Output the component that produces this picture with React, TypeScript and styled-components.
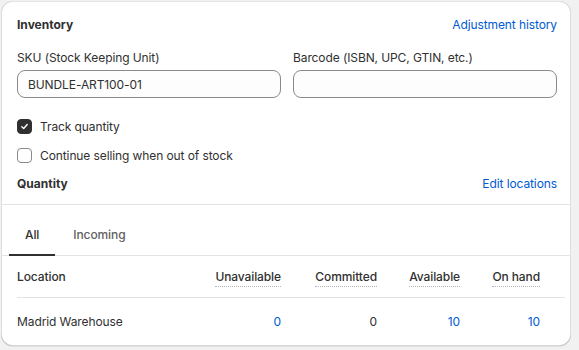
import React from "react";
import styled, { createGlobalStyle } from "styled-components";

const Global = createGlobalStyle`
  html, body { margin: 0; padding: 0; background: #f1f1f1; }
  body {
    font-family: Inter, "Noto Sans", "Liberation Sans", sans-serif;
    font-size: 12px;
    letter-spacing: -0.1px;
    color: #303030;
    -webkit-font-smoothing: antialiased;
  }
  * { box-sizing: border-box; }
`;

const Page = styled.div`
  padding: 1px 8px 4px 1px;
`;

const Card = styled.section`
  width: 570px;
  background: #ffffff;
  border-radius: 12px;
  overflow: hidden;
  box-shadow: 0 1px 0 0 rgba(26, 26, 26, 0.07),
    inset 0 1px 0 0 rgba(204, 204, 204, 0.5),
    inset 0 -1px 0 0 rgba(0, 0, 0, 0.17),
    inset -1px 0 0 0 rgba(0, 0, 0, 0.13),
    inset 1px 0 0 0 rgba(0, 0, 0, 0.13);
`;

const Top = styled.div`
  padding: 14px 14px 10px 16px;
  display: flex;
  flex-direction: column;
`;

const HeadRow = styled.div<{ $mt?: number }>`
  display: flex;
  justify-content: space-between;
  align-items: center;
  height: 20px;
  line-height: 20px;
  margin-top: ${(p) => p.$mt ?? 0}px;
`;

const Heading = styled.h2`
  margin: 0;
  font-size: 12px;
  font-weight: 650;
  letter-spacing: 0;
  color: #303030;
`;

const Link = styled.a`
  color: #005bd3;
  font-weight: 400;
  text-decoration: none;
  cursor: pointer;
`;

const Fields = styled.div`
  display: grid;
  grid-template-columns: 1fr 1fr;
  gap: 12px;
  margin-top: 13px;
`;

const Field = styled.label`
  display: flex;
  flex-direction: column;
`;

const FieldLabel = styled.span`
  line-height: 20px;
  color: #303030;
  font-weight: 400;
`;

const Input = styled.input`
  margin-top: 2px;
  height: 28px;
  border: 1px solid #8a8a8a;
  border-radius: 8px;
  background: #fdfdfd;
  padding: 0 10px;
  font-family: inherit;
  font-size: 12px;
  letter-spacing: -0.1px;
  color: #303030;
  outline: none;
`;

const Checks = styled.div`
  margin-top: 14px;
  display: flex;
  flex-direction: column;
`;

const CheckRow = styled.label`
  display: flex;
  align-items: center;
  gap: 8px;
  height: 29px;
  line-height: 20px;
  font-weight: 400;
`;

const Box = styled.span<{ $checked?: boolean }>`
  width: 15px;
  height: 15px;
  border-radius: 4px;
  display: inline-flex;
  align-items: center;
  justify-content: center;
  background: ${(p) => (p.$checked ? "#303030" : "#ffffff")};
  border: 1px solid ${(p) => (p.$checked ? "#303030" : "#8a8a8a")};
`;

const Divider = styled.div`
  border-top: 1px solid #e3e3e3;
`;

const Tabs = styled.div`
  display: flex;
  gap: 2px;
  padding: 7px 8px 0;
  border-bottom: 1px solid #e3e3e3;
`;

const Tab = styled.button<{ $active?: boolean }>`
  height: 44px;
  margin-bottom: -1px;
  padding: 2px 16px 0;
  background: none;
  border: none;
  border-bottom: 2px solid ${(p) => (p.$active ? "#303030" : "transparent")};
  border-radius: 0;
  font-family: inherit;
  font-size: 12px;
  letter-spacing: -0.1px;
  font-weight: 550;
  color: ${(p) => (p.$active ? "#303030" : "#616161")};
  cursor: pointer;
`;

const Table = styled.div`
  padding: 0 6px 0 16px;
`;

const Row = styled.div<{ $head?: boolean }>`
  display: grid;
  grid-template-columns: 1fr 100px 96px 83px 80px;
  align-items: center;
  padding-right: 25px;
  height: ${(p) => (p.$head ? "42px" : "48px")};
  border-bottom: ${(p) => (p.$head ? "1px solid #e3e3e3" : "none")};
  font-weight: ${(p) => (p.$head ? 550 : 400)};
`;

const Cell = styled.div<{ $num?: boolean }>`
  text-align: ${(p) => (p.$num ? "right" : "left")};
  line-height: 20px;
`;

const ColTitle = styled.span`
  display: inline-block;
  line-height: 18px;
  border-bottom: 1px dotted #b5b5b5;
`;

const Num = styled.span<{ $link?: boolean }>`
  color: ${(p) => (p.$link ? "#005bd3" : "#303030")};
`;

const CheckIcon = () => (
  <svg width="9" height="9" viewBox="0 0 10 10" fill="none">
    <path d="M2 5.2 L4.1 7.2 L8 2.8" stroke="#fff" strokeWidth="1.6" strokeLinecap="round" strokeLinejoin="round" />
  </svg>
);

const columns = ["Unavailable", "Committed", "Available", "On hand"];
const values: { v: string; link: boolean }[] = [
  { v: "0", link: true },
  { v: "0", link: false },
  { v: "10", link: true },
  { v: "10", link: true },
];

export default function App() {
  return (
    <>
      <Global />
      <Page>
        <Card>
          <Top>
            <HeadRow>
              <Heading>Inventory</Heading>
              <Link>Adjustment history</Link>
            </HeadRow>
            <Fields>
              <Field>
                <FieldLabel>SKU (Stock Keeping Unit)</FieldLabel>
                <Input defaultValue="BUNDLE-ART100-01" />
              </Field>
              <Field>
                <FieldLabel>Barcode (ISBN, UPC, GTIN, etc.)</FieldLabel>
                <Input defaultValue="" />
              </Field>
            </Fields>
            <Checks>
              <CheckRow>
                <Box $checked>
                  <CheckIcon />
                </Box>
                Track quantity
              </CheckRow>
              <CheckRow>
                <Box />
                Continue selling when out of stock
              </CheckRow>
            </Checks>
            <HeadRow $mt={4}>
              <Heading>Quantity</Heading>
              <Link>Edit locations</Link>
            </HeadRow>
          </Top>
          <Divider />
          <Tabs>
            <Tab $active>All</Tab>
            <Tab>Incoming</Tab>
          </Tabs>
          <Table>
            <Row $head>
              <Cell>Location</Cell>
              {columns.map((c) => (
                <Cell $num key={c}>
                  <ColTitle>{c}</ColTitle>
                </Cell>
              ))}
            </Row>
            <Row>
              <Cell>Madrid Warehouse</Cell>
              {values.map((v, i) => (
                <Cell $num key={i}>
                  <Num $link={v.link}>{v.v}</Num>
                </Cell>
              ))}
            </Row>
          </Table>
        </Card>
      </Page>
    </>
  );
}
